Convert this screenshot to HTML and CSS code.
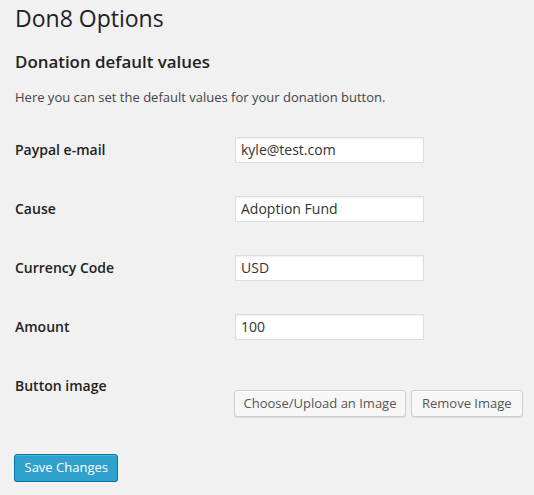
FILE: index.html
```html
<!DOCTYPE html>
<html>
<head>
<meta charset="utf-8">
<link rel="stylesheet" href="styles.css">
</head>
<body>
<div class="wrap">
  <h1 class="page-title">Don8 Options</h1>
  <h3 class="section-title">Donation default values</h3>
  <p class="description">Here you can set the default values for your donation button.</p>
  <form class="options-form">
    <div class="row">
      <div class="label">Paypal e-mail</div>
      <div class="field"><input class="text-input" type="text" value="kyle@test.com"></div>
    </div>
    <div class="row">
      <div class="label">Cause</div>
      <div class="field"><input class="text-input" type="text" value="Adoption Fund"></div>
    </div>
    <div class="row">
      <div class="label">Currency Code</div>
      <div class="field"><input class="text-input" type="text" value="USD"></div>
    </div>
    <div class="row">
      <div class="label">Amount</div>
      <div class="field"><input class="text-input" type="text" value="100"></div>
    </div>
    <div class="row row-image">
      <div class="label">Button image</div>
      <div class="field field-buttons">
        <button type="button" class="btn btn-upload">Choose/Upload an Image</button>
        <button type="button" class="btn">Remove Image</button>
      </div>
    </div>
    <div class="submit">
      <button type="button" class="btn btn-primary">Save Changes</button>
    </div>
  </form>
</div>
</body>
</html>
```

FILE: styles.css
```css
html, body {
  margin: 0;
  padding: 0;
  background: #f1f1f1;
}

body {
  font-family: "Open Sans", "DejaVu Sans", sans-serif;
  color: #444;
  font-size: 13px;
}

.wrap {
  padding: 0 15px;
}

.page-title {
  margin: 0;
  padding-top: 4px;
  font-size: 23px;
  line-height: 29px;
  font-weight: 400;
  color: #222;
}

.section-title {
  margin: 18px 0 0;
  font-size: 16.9px;
  line-height: 22px;
  font-weight: 600;
  color: #222;
}

.description {
  margin: 15px 0 0;
  font-size: 13px;
  line-height: 19.5px;
  color: #444;
}

.options-form {
  margin-top: 13px;
}

.row {
  display: flex;
  height: 59px;
}

.label {
  width: 220px;
  flex: none;
  padding-top: 20px;
  font-size: 14px;
  line-height: 18.2px;
  font-weight: 600;
  color: #222;
}

.field {
  padding-top: 16px;
}

.text-input {
  box-sizing: border-box;
  width: 189px;
  height: 26px;
  margin: 0;
  padding: 0 5px;
  border: 1px solid #ddd;
  background: #fff;
  box-shadow: inset 0 1px 2px rgba(0, 0, 0, 0.07);
  font-family: "Open Sans", "DejaVu Sans", sans-serif;
  font-size: 14px;
  color: #333;
  outline: none;
}

.row-image {
  height: auto;
  padding-bottom: 15px;
}

.field-buttons {
  display: flex;
  gap: 5px;
  padding-top: 33px;
  margin-left: -1px;
}

.btn {
  box-sizing: border-box;
  height: 27px;
  margin: 0;
  padding: 0 10px 1px;
  border: 1px solid #ccc;
  border-radius: 3px;
  background: #f7f7f7;
  box-shadow: inset 0 1px 0 #fff, 0 1px 0 rgba(0, 0, 0, 0.08);
  font-family: "Open Sans", "DejaVu Sans", sans-serif;
  font-size: 13px;
  line-height: 24px;
  color: #555;
  white-space: nowrap;
}

.btn-upload {
  padding: 0 8.5px 1px;
}

.submit {
  padding-top: 22px;
  margin-left: -1px;
}

.btn-primary {
  height: 28px;
  line-height: 25px;
  padding: 0 9.5px 1px;
  background: #2ea2cc;
  border-color: #0074a2;
  box-shadow: inset 0 1px 0 rgba(120, 200, 230, 0.5), 0 1px 0 rgba(0, 0, 0, 0.15);
  color: #fff;
}
```
